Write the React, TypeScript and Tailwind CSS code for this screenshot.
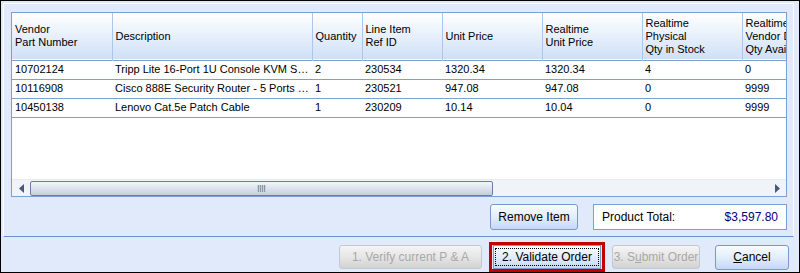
import React from "react";

const columns = [
  { w: 100, label: ["Vendor", "Part Number"] },
  { w: 200, label: ["Description"] },
  { w: 50, label: ["Quantity"] },
  { w: 80, label: ["Line Item", "Ref ID"] },
  { w: 100, label: ["Unit Price"] },
  { w: 100, label: ["Realtime", "Unit Price"] },
  { w: 100, label: ["Realtime", "Physical", "Qty in Stock"] },
  { w: 100, label: ["Realtime", "Vendor Drop Ship", "Qty Available"] },
];

const rows = [
  ["10702124", "Tripp Lite 16-Port 1U Console KVM Switch", "2", "230534", "1320.34", "1320.34", "4", "0"],
  ["10116908", "Cisco 888E Security Router - 5 Ports - 4 Slots", "1", "230521", "947.08", "947.08", "0", "9999"],
  ["10450138", "Lenovo Cat.5e Patch Cable", "1", "230209", "10.14", "10.04", "0", "9999"],
];

const btn =
  "h-[24px] rounded-[3px] border border-[#7a98c8] bg-gradient-to-b from-[#f7fbff] via-[#e3edfb] to-[#c5d8f3] text-[12px] text-black flex items-center justify-center";
const btnOff =
  "h-[24px] rounded-[3px] border border-[#c4c8cf] bg-gradient-to-b from-[#f4f4f4] via-[#e6e6e6] to-[#d2d2d2] text-[12px] text-[#a8a8a8] flex items-center justify-center";

export default function App() {
  return (
    <div
      className="w-[800px] h-[273px] border border-black bg-[#e0eafa] flex flex-col overflow-hidden"
      style={{ fontFamily: '"Liberation Sans", Arial, sans-serif' }}
    >
      {/* group panel */}
      <div className="ml-[2px] mr-[5px] mt-[2px] h-[234px] border-l border-t border-r border-white border-b border-b-[#6d8fcb] pl-[7px] pr-[6px] pt-[8px] flex flex-col">
        {/* grid */}
        <div className="w-[776px] h-[185px] border border-[#7b9ed6] bg-white flex flex-col overflow-hidden">
          <div className="flex-1 overflow-hidden">
            <table className="table-fixed border-collapse text-[11px] text-black" style={{ width: 830 }}>
              <colgroup>
                {columns.map((c, i) => (
                  <col key={i} style={{ width: c.w }} />
                ))}
              </colgroup>
              <thead>
                <tr className="h-[47px] bg-gradient-to-b from-white to-[#cfe0f6] border-b border-[#7f9fd3]">
                  {columns.map((c, i) => (
                    <th
                      key={i}
                      className="font-normal text-left align-middle pl-[3px] leading-[13px] border-r border-[#a9c6ee] whitespace-nowrap overflow-hidden"
                    >
                      {c.label.map((l, j) => (
                        <div key={j}>{l}</div>
                      ))}
                    </th>
                  ))}
                </tr>
              </thead>
              <tbody>
                {rows.map((r, i) => (
                  <tr key={i} className="h-[19px] border-b border-[#7f9fd3]">
                    {r.map((v, j) => (
                      <td key={j} className="pl-[3px] pr-[3px] whitespace-nowrap overflow-hidden text-ellipsis">
                        {v}
                      </td>
                    ))}
                  </tr>
                ))}
              </tbody>
            </table>
          </div>
          {/* horizontal scrollbar */}
          <div className="h-[17px] bg-[#f0f3f8] border-t border-[#e8ecf2] flex items-center px-[1px] gap-[1px]">
            <div className="w-[16px] h-[15px] flex items-center justify-center">
              <svg width="5" height="9" viewBox="0 0 5 9">
                <path d="M5 0 L0 4.5 L5 9 Z" fill="#4a5878" />
              </svg>
            </div>
            <div className="w-[463px] h-[15px] rounded-[2px] border border-[#6c7ea3] bg-gradient-to-b from-[#f3f5f9] via-[#dde3ed] to-[#c4cddd] flex items-center justify-center">
              <div className="flex gap-[1px] bg-[#c8d0dc] px-[1px]">
                <div className="w-[1px] h-[7px] bg-[#8c97aa]" />
                <div className="w-[1px] h-[7px] bg-[#8c97aa]" />
                <div className="w-[1px] h-[7px] bg-[#8c97aa]" />
                <div className="w-[1px] h-[7px] bg-[#8c97aa]" />
              </div>
            </div>
            <div className="flex-1" />
            <div className="w-[16px] h-[15px] flex items-center justify-center">
              <svg width="5" height="9" viewBox="0 0 5 9">
                <path d="M0 0 L5 4.5 L0 9 Z" fill="#4a5878" />
              </svg>
            </div>
          </div>
        </div>

        {/* remove item / total */}
        <div className="flex items-center justify-end mt-[7px] gap-[15px] pr-[0px]">
          <button className={`${btn} w-[88px] h-[26px]`}>Remove Item</button>
          <div className="w-[194px] h-[26px] bg-white border border-[#7b9ed6] flex items-center justify-between px-[8px] text-[12px]">
            <span className="text-black">Product Total:</span>
            <span className="text-[#00007f]">$3,597.80</span>
          </div>
        </div>
      </div>

      {/* bottom buttons */}
      <div className="flex items-center justify-end mt-[5px] pr-[10px]">
        <button className={`${btnOff} w-[143px]`}>1. Verify current P &amp; A</button>
        <div className="ml-[7px] w-[116px] h-[30px] border-[3px] border-[#c00000] flex items-center justify-center">
          <div className={`${btn} w-[108px] h-[22px] rounded-none border-[#5a7fb9]`}>
            <div className="w-[104px] h-[18px] border border-dotted border-black flex items-center justify-center">
              2. Validate Order
            </div>
          </div>
        </div>
        <button className={`${btnOff} ml-[7px] w-[88px]`}>
          3. S<span className="underline">u</span>bmit Order
        </button>
        <button className={`${btn} ml-[15px] w-[74px] h-[25px]`}>
          <span className="underline">C</span>ancel
        </button>
      </div>
    </div>
  );
}
